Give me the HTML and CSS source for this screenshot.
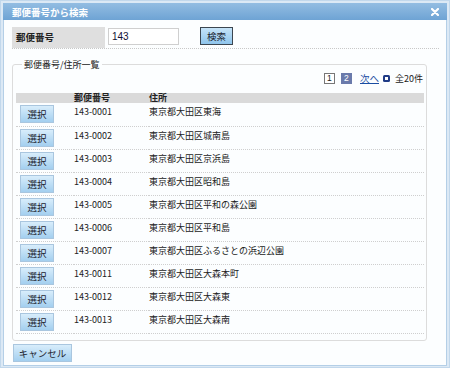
FILE: index.html
```html
<!DOCTYPE html>
<html lang="ja">
<head>
  <meta charset="UTF-8" />
  <title>郵便番号から検索</title>
  <link rel="stylesheet" href="styles.css">
</head>
<body>

<div class="dialog">
  <div class="dialog-header">
    <span class="dialog-title">郵便番号から検索</span>
    <button class="close" aria-label="閉じる">
      <svg width="8" height="8" viewBox="0 0 8 8"><path d="M1 1 L7 7 M7 1 L1 7" stroke="#fff" stroke-width="2.2" stroke-linecap="round"/></svg>
    </button>
  </div>

  <div class="dialog-body">
    <div class="search-row">
      <div class="search-label">郵便番号</div>
      <input class="search-input" type="text" value="143" />
      <button class="btn btn-search">検索</button>
    </div>

    <fieldset class="result-box">
      <legend>郵便番号/住所一覧</legend>

      <div class="pager">
        <span class="page">1</span>
        <span class="page current">2</span>
        <a class="next" href="#">次へ</a>
        <span class="next-icon"></span>
        <span class="total">全20件</span>
      </div>

      <table class="result-table">
        <thead>
          <tr>
            <th class="col-btn"></th>
            <th class="col-zip">郵便番号</th>
            <th>住所</th>
          </tr>
        </thead>
        <tbody id="rows">
          <!-- rows injected by JS -->
        </tbody>
      </table>
    </fieldset>

    <button class="btn btn-cancel">キャンセル</button>
  </div>
</div>

<script>
  const addresses = [
    ["143-0001", "東京都大田区東海"],
    ["143-0002", "東京都大田区城南島"],
    ["143-0003", "東京都大田区京浜島"],
    ["143-0004", "東京都大田区昭和島"],
    ["143-0005", "東京都大田区平和の森公園"],
    ["143-0006", "東京都大田区平和島"],
    ["143-0007", "東京都大田区ふるさとの浜辺公園"],
    ["143-0011", "東京都大田区大森本町"],
    ["143-0012", "東京都大田区大森東"],
    ["143-0013", "東京都大田区大森南"],
  ];

  const rows = document.getElementById('rows');
  addresses.forEach(([zip, addr]) => {
    const tr = document.createElement('tr');
    tr.innerHTML = '<td class="col-btn"><button class="btn btn-select">選択</button></td>' +
      '<td class="col-zip">' + zip + '</td><td>' + addr + '</td>';
    rows.appendChild(tr);
  });
</script>

</body>
</html>
```

FILE: styles.css
```css
* {
  margin: 0;
  padding: 0;
  box-sizing: border-box;
}

html, body {
  font-family: "Noto Sans CJK JP", "Liberation Sans", sans-serif;
  font-size: 9px;
  color: #222;
  background: #fff;
}

.dialog {
  width: 450px;
  height: 368px;
  background: #dce9f5;
  border: 1px solid #c2d8ec;
  padding: 2px 2px 1px 2px;
  display: flex;
  flex-direction: column;
}

.dialog-header {
  height: 17px;
  background: linear-gradient(#93bde2, #6ea3d4);
  display: flex;
  justify-content: space-between;
  align-items: center;
  padding: 0 8px 0 9px;
}

.dialog-title {
  color: #fff;
  font-weight: bold;
  font-size: 9.5px;
}

.close {
  background: none;
  border: none;
  display: flex;
  cursor: pointer;
}

.dialog-body {
  flex: 1;
  background: #fcfeff;
  border: 1px solid #b4cfe7;
  border-top: none;
  padding: 7px 0 0 8px;
}

.search-row {
  width: 427px;
  display: flex;
  align-items: flex-start;
  border-bottom: 1px dotted #c8c8c8;
}

.search-label {
  width: 93px;
  height: 21px;
  background: #dfdfdf;
  font-weight: bold;
  font-size: 9.5px;
  line-height: 21px;
  padding-left: 4px;
}

.search-input {
  width: 71px;
  height: 17px;
  margin: 1px 0 0 3px;
  border: 1px solid #cfcfcf;
  background: #fff;
  font-family: "Liberation Sans", sans-serif;
  font-size: 10px;
  color: #113;
  padding-left: 3px;
}

.btn {
  font-family: inherit;
  font-size: 9.5px;
  color: #1c2430;
  background: linear-gradient(#d8edfb, #a3cfef);
  border: 1px solid #a9c6df;
  cursor: pointer;
}

.btn-search {
  width: 33px;
  height: 18px;
  margin-left: 21px;
  border: 1px solid #3c4650;
  background: linear-gradient(#c5e3f8, #8fc5ec);
}

.result-box {
  width: 415px;
  height: 282px;
  margin-top: 10px;
  border: 1px solid #dcdcdc;
  border-radius: 3px;
  padding: 0 2px 0 3px;
}

.result-box legend {
  margin-left: 6px;
  padding: 0 2px;
  font-size: 9px;
  line-height: 11px;
}

.pager {
  display: flex;
  justify-content: flex-end;
  align-items: center;
  height: 12px;
  margin-top: 2px;
  padding-right: 1px;
}

.page {
  width: 11px;
  height: 11px;
  border: 1px solid #777;
  text-align: center;
  line-height: 9px;
  font-family: "Liberation Sans", sans-serif;
  font-size: 8.5px;
  margin-left: 6px;
  background: #fff;
}

.page.current {
  background: #6a7aab;
  border-color: #6a7aab;
  color: #fff;
}

.next {
  color: #1a4da2;
  font-size: 9.5px;
  margin-left: 8px;
  text-decoration: underline;
}

.next-icon {
  width: 7px;
  height: 7px;
  background: #1f3b86;
  border-radius: 1.5px;
  margin-left: 4px;
  position: relative;
}

.next-icon::after {
  content: "";
  position: absolute;
  left: 2px;
  top: 2px;
  width: 3px;
  height: 3px;
  background: #fff;
}

.total {
  margin-left: 5px;
}

.result-table {
  width: 408px;
  border-collapse: collapse;
  margin-top: 9px;
}

.result-table th {
  background: #dadada;
  height: 10px;
  line-height: 10px;
  font-weight: bold;
  text-align: left;
  vertical-align: bottom;
}

.result-table td {
  height: 23px;
  vertical-align: top;
  padding-top: 3px;
  line-height: 11px;
  border-bottom: 1px dotted #cfcfcf;
}

.result-table td.col-btn {
  padding: 2px 0 0 4px;
}

.col-btn {
  width: 58px;
}

.col-zip {
  width: 75px;
}

.btn-select {
  width: 34px;
  height: 18px;
  display: block;
}

.btn-cancel {
  width: 59px;
  height: 18px;
  margin-top: 3px;
  margin-left: 1px;
}
```
